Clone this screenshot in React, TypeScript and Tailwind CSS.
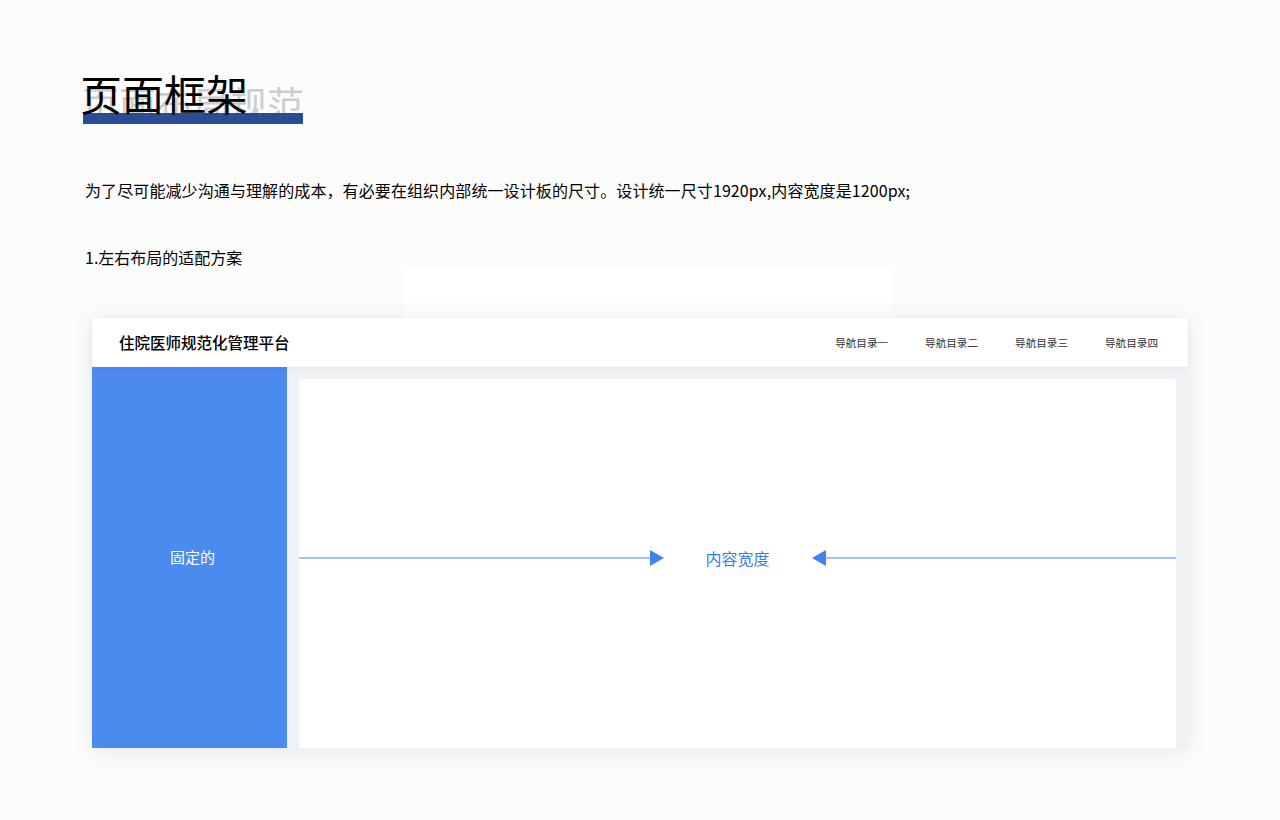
const NAV = ['导航目录一', '导航目录二', '导航目录三', '导航目录四'];

export default function App() {
  return (
    <div
      className="relative min-h-[820px] w-[1280px] overflow-hidden bg-[#fcfcfc] text-black"
      style={{ fontFamily: '"Noto Sans CJK SC", "Noto Sans", sans-serif' }}
    >
      {/* faint leftover block above the frame */}
      <div className="absolute left-[404px] top-[267px] h-[51px] w-[487px] bg-white" />

      <div className="relative px-[82px] pt-[68px]">
        {/* title: black over a grey ghost title with a navy bar */}
        <div className="relative h-[60px] w-[240px]">
          <div className="absolute left-0 top-[12px] whitespace-nowrap text-[37px] leading-[46px] text-[#cdcdcd]">
            页面布局规范
          </div>
          <div className="absolute left-[1px] top-[45px] h-[11px] w-[220px] bg-[#1b3f8e] opacity-[0.93]" />
          <div className="absolute left-[-2px] top-[-2px] whitespace-nowrap text-[42px] leading-[54px]">页面框架</div>
        </div>

        <p className="ml-[3px] mt-[50px] text-[16px] leading-[24px] tracking-[0.1px]">
          为了尽可能减少沟通与理解的成本，有必要在组织内部统一设计板的尺寸。设计统一尺寸1920px,内容宽度是1200px;
        </p>
        <p className="ml-[3px] mt-[43px] text-[16px] leading-[24px]">1.左右布局的适配方案</p>
      </div>

      {/* frame */}
      <div className="relative ml-[92px] mt-[49px] flex h-[430px] w-[1096px] flex-col bg-white shadow-[0_2px_22px_rgba(0,0,0,0.09)]">
        <header className="relative z-10 flex h-[49px] items-center justify-between pl-[27px] pr-[30px] shadow-[0_2px_6px_rgba(0,0,0,0.05)]">
          <span className="text-[15.5px] font-medium">住院医师规范化管理平台</span>
          <nav className="flex gap-[37px] text-[10.6px] text-[#333]">
            {NAV.map((n) => (
              <span key={n}>{n}</span>
            ))}
          </nav>
        </header>

        <div className="flex flex-1">
          <aside className="flex w-[195px] items-center justify-center bg-[#4b8bef] pl-[6px] text-[15px] text-white">
            固定的
          </aside>
          <main className="flex flex-1 bg-[#f0f1f4] px-[12px] pt-[12px]">
            <div className="flex flex-1 flex-col rounded-t-[3px] bg-white">
              <div className="mt-[169px] flex items-center">
                <div className="h-[2px] flex-1 bg-[#a2c3f6]" />
                <svg width="14" height="16" viewBox="0 0 14 16" className="block">
                  <path d="M0 0 L14 8 L0 16 Z" fill="#3f83ee" />
                </svg>
                <span className="mx-[42px] text-[16px] leading-[20px] text-[#3a7eea]">内容宽度</span>
                <svg width="14" height="16" viewBox="0 0 14 16" className="block">
                  <path d="M14 0 L0 8 L14 16 Z" fill="#3f83ee" />
                </svg>
                <div className="h-[2px] flex-1 bg-[#a2c3f6]" />
              </div>
            </div>
          </main>
        </div>
      </div>
    </div>
  );
}
